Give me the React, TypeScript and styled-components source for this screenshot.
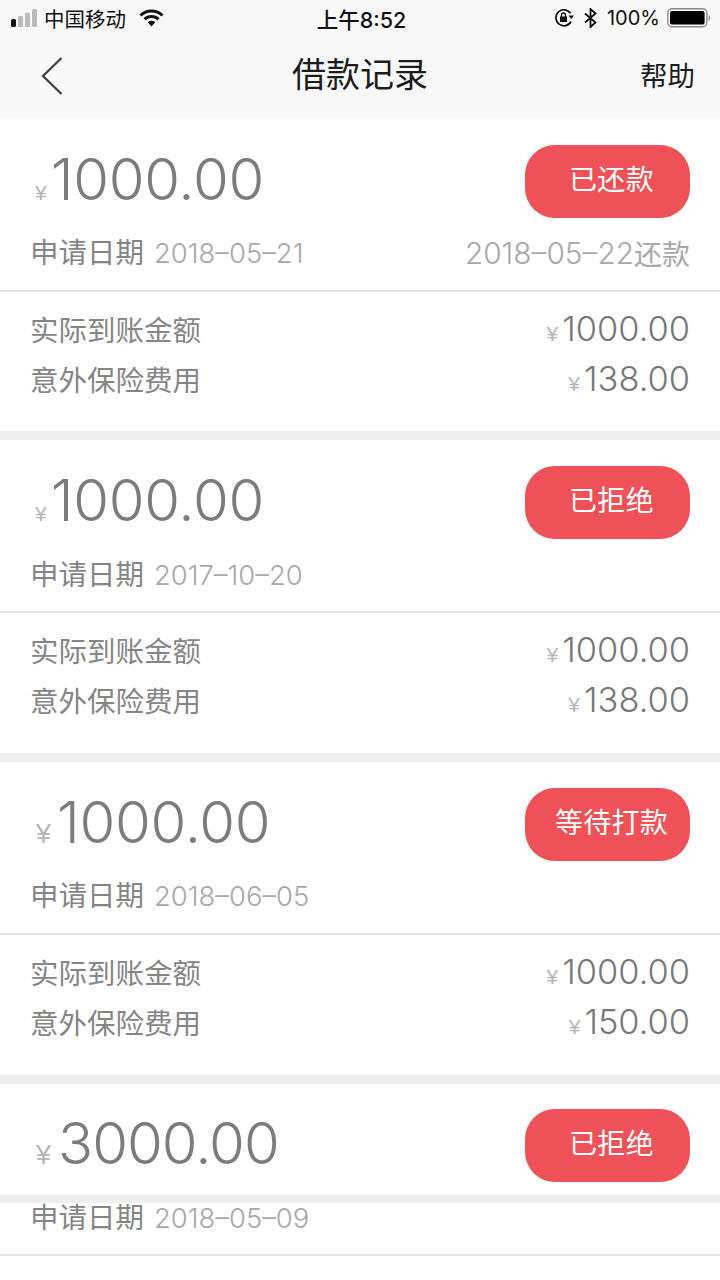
import React from "react";
import styled, { createGlobalStyle } from "styled-components";

const Global = createGlobalStyle`
  html, body { margin: 0; padding: 0; background: #fff; }
  body { font-family: "Liberation Sans", "Noto Sans CJK SC", sans-serif; }
`;
const Page = styled.div`
  width: 720px; height: 1280px; overflow: hidden; background: #fff; display: flex; flex-direction: column;
`;
const TopBar = styled.header`
  height: 118px; flex: none; background: #f8f8f8; display: flex; flex-direction: column;
`;
const StatusBar = styled.div`
  height: 36px; display: grid; grid-template-columns: 1fr auto 1fr; align-items: center; padding: 0 9px 0 11px;
  font-size: 21px; color: #111;
`;
const StatusLeft = styled.div`display: flex; align-items: center; gap: 5px;`;
const StatusRight = styled.div`display: flex; align-items: center; justify-content: flex-end; gap: 10px;`;
const Clock = styled.div`font-family: Inter, "Noto Sans CJK SC", sans-serif; font-weight: 500; font-size: 21.500px; margin-left: 1px;`;
const Carrier = styled.span`margin-right: 8px; font-size: 20.500px;`;
const Percent = styled.span`font-family: Inter, sans-serif; font-weight: 400; font-size: 20px; margin-right: -3px;`;
const NavBar = styled.div`
  flex: 1; display: grid; grid-template-columns: 1fr auto 1fr; align-items: center; padding: 0 25px 5px;
`;
const BackSlot = styled.div`display: flex; padding: 2px 0 0 16px;`;
const Title = styled.h1`margin: 0; font-size: 34px; font-weight: 400; color: #1c1c1c; line-height: 40px;`;
const Help = styled.div`justify-self: end; font-size: 27.500px; color: #1c1c1c; margin-bottom: 2px;`;
const Card = styled.section`flex: none; height: 313px; display: flex; flex-direction: column;`;
const Band = styled.div<{ $h?: number }>`flex: none; height: ${p => p.$h ?? 9}px; background: #efefef;`;
const Head = styled.div<{ $h: number }>`
  height: ${p => p.$h}px; flex: none; box-sizing: border-box; border-bottom: 2px solid #e4e4e4;
  display: flex; flex-direction: column;
`;
const TopRow = styled.div<{ $h: number; $pad: number }>`
  flex: none; box-sizing: border-box; height: ${p => p.$h}px; padding: ${p => p.$pad}px 30px 0 0;
  display: flex; align-items: flex-start; justify-content: space-between;
`;
const AmountWrap = styled.div<{ $left: number }>`display: flex; align-items: baseline; padding-left: ${p => p.$left}px; margin-top: -1px;`;
const Yen = styled.span<{ $size: number; $gap: number }>`
  font-family: "Liberation Sans", sans-serif; font-size: ${p => p.$size}px; color: #b5b5b5; margin-right: ${p => p.$gap}px;
`;
const BigNum = styled.span<{ $spacing: number }>`
  font-family: Inter, sans-serif; font-weight: 300; font-size: 58px; color: #7c7c7c; line-height: 70px; letter-spacing: ${p => p.$spacing}px;
`;
const Status = styled.div`
  width: 165px; height: 73px; border-radius: 30px; background: #ef5159; color: #fff; font-size: 28px;
  display: flex; align-items: center; justify-content: center; padding: 0 0 8px 8px; box-sizing: border-box; letter-spacing: 0.3px;
`;
const DateRow = styled.div`
  display: flex; align-items: center; justify-content: space-between; padding: 0 30px; line-height: 30px;
`;
const DateLeft = styled.div`display: flex; align-items: center; gap: 10px;`;
const DateLabel = styled.span`font-size: 28.500px; color: #858585;`;
const DateValue = styled.span`font-family: Inter, sans-serif; font-weight: 300; font-size: 27.400px; color: #a8a8a8;`;
const RepayValue = styled.span`font-family: Inter, sans-serif; font-weight: 300; font-size: 29.800px; color: #a8a8a8;`;
const RepaySuffix = styled.span`font-family: "Noto Sans CJK SC", sans-serif; font-size: 28px; color: #a8a8a8;`;
const RepayGroup = styled.div`display: flex; align-items: center;`;
const Lines = styled.div`
  padding: 11px 30px 0; display: flex; flex-direction: column;
`;
const Line = styled.div`
  height: 50.500px; display: flex; align-items: center; justify-content: space-between;
`;
const LineLabel = styled.span`font-size: 28.500px; color: #858585;`;
const LineAmount = styled.span`display: flex; align-items: baseline; font-family: Inter, sans-serif; font-weight: 300; font-size: 34.400px; color: #787878;`;
const SmallYen = styled.span`font-family: "Liberation Sans", sans-serif; font-size: 21px; color: #b5b5b5; margin-right: 4px;`;

const Back = () => (
  <svg width="22" height="40" viewBox="0 0 22 40" fill="none" stroke="#444" strokeWidth="2.400">
    <path d="M20.500 2 L2 20 L20.500 38" />
  </svg>
);
const Signal = () => (
  <svg width="28" height="18" viewBox="0 0 28 18">
    <rect x="0" y="10" width="5" height="8" rx="1.500" fill="#111" />
    <rect x="7" y="7" width="5" height="11" rx="1.500" fill="#bbb" />
    <rect x="14" y="3.500" width="5" height="14.500" rx="1.500" fill="#bbb" />
    <rect x="21" y="0" width="5" height="18" rx="1.500" fill="#bbb" />
  </svg>
);
const Wifi = () => (
  <svg width="25" height="18" viewBox="0 0 25 18" fill="none" stroke="#111" strokeWidth="3">
    <path d="M1.500 6.500A15.500 15.500 0 0 1 23.500 6.500" />
    <path d="M5.500 10.300A10 10 0 0 1 19.500 10.300" />
    <path d="M8.800 13.200A5.500 5.500 0 0 1 16.200 13.200L12.500 17.500Z" fill="#111" stroke="none" />
  </svg>
);
const Lock = () => (
  <svg width="20" height="20" viewBox="0 0 20 20" fill="none" stroke="#111" strokeWidth="1.700">
    <path d="M16.500 5.200A8 8 0 1 0 17 13.500" />
    <path d="M14.500 7.500H20L17.200 11Z" fill="#111" stroke="none" />
    <rect x="6" y="8.500" width="7" height="5.500" fill="#111" stroke="none" />
    <path d="M7.500 9V7a2 2 0 0 1 4 0v2" strokeWidth="1.300" />
  </svg>
);
const Bt = () => (
  <svg width="13" height="20" viewBox="0 0 13 20" fill="none" stroke="#111" strokeWidth="1.800">
    <path d="M1 5.500L11.500 14.500L6.500 19V1L11.500 5.500L1 14.500" />
  </svg>
);
const Battery = () => (
  <svg width="44" height="20" viewBox="0 0 44 20">
    <rect x="0.800" y="0.800" width="39" height="18" rx="4" fill="none" stroke="#8a8a8a" strokeWidth="1.400" />
    <rect x="3" y="3" width="34.600" height="13.600" rx="2.200" fill="#000" />
    <path d="M41.500 7c1.300.3 1.800 1.500 1.800 3s-.5 2.700-1.800 3Z" fill="#999" />
  </svg>
);

type Rec = {
  left: number; yen: number; yenGap: number; status: string; date: string; repay?: string;
  fee: string; headH: number; topH: number; pad: number;
};
const recs: Rec[] = [
  { left: 35, yen: 21, yenGap: 4, status: "已还款", date: "2018–05–21", repay: "2018–05–22", fee: "138.00", headH: 174, topH: 120, pad: 27 },
  { left: 35, yen: 21, yenGap: 4, status: "已拒绝", date: "2017–10–20", fee: "138.00", headH: 173, topH: 120, pad: 26 },
  { left: 36, yen: 27, yenGap: 6, status: "等待打款", date: "2018–06–05", fee: "150.00", headH: 173, topH: 119, pad: 26 },
];

const MoneyLine = ({ label, value }: { label: string; value: string }) => (
  <Line>
    <LineLabel>{label}</LineLabel>
    <LineAmount><SmallYen>¥</SmallYen>{value}</LineAmount>
  </Line>
);
const DateInfo = ({ date, repay }: { date: string; repay?: string }) => (
  <DateRow>
    <DateLeft><DateLabel>申请日期</DateLabel><DateValue>{date}</DateValue></DateLeft>
    {repay && <RepayGroup><RepayValue>{repay}</RepayValue><RepaySuffix>还款</RepaySuffix></RepayGroup>}
  </DateRow>
);

export default function App() {
  return (
    <Page>
      <Global />
      <TopBar>
        <StatusBar>
          <StatusLeft><Signal /><Carrier>中国移动</Carrier><Wifi /></StatusLeft>
          <Clock>上午8:52</Clock>
          <StatusRight><Lock /><Bt /><Percent>100%</Percent><Battery /></StatusRight>
        </StatusBar>
        <NavBar>
          <BackSlot><Back /></BackSlot>
          <Title>借款记录</Title>
          <Help>帮助</Help>
        </NavBar>
      </TopBar>
      {recs.map(r => (
        <React.Fragment key={r.date}>
          <Card>
            <Head $h={r.headH}>
              <TopRow $h={r.topH} $pad={r.pad}>
                <AmountWrap $left={r.left}>
                  <Yen $size={r.yen} $gap={r.yenGap}>¥</Yen>
                  <BigNum $spacing={-0.3}>1000.00</BigNum>
                </AmountWrap>
                <Status>{r.status}</Status>
              </TopRow>
              <DateInfo date={r.date} repay={r.repay} />
            </Head>
            <Lines>
              <MoneyLine label="实际到账金额" value="1000.00" />
              <MoneyLine label="意外保险费用" value={r.fee} />
            </Lines>
          </Card>
          <Band />
        </React.Fragment>
      ))}
      <Head $h={172}>
        <TopRow $h={111} $pad={25}>
          <AmountWrap $left={36}>
            <Yen $size={27} $gap={7}>¥</Yen>
            <BigNum $spacing={-1}>3000.00</BigNum>
          </AmountWrap>
          <Status>已拒绝</Status>
        </TopRow>
        <Band $h={8} />
        <DateInfo date="2018–05–09" />
      </Head>
    </Page>
  );
}
